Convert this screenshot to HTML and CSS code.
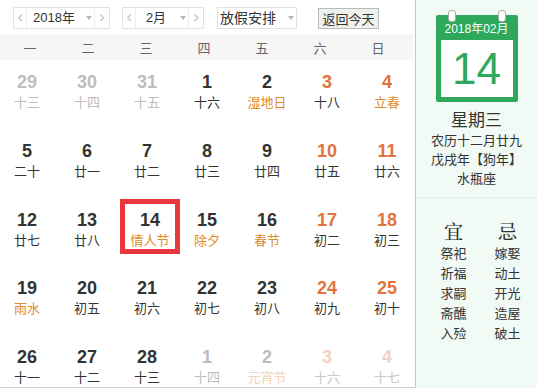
FILE: index.html
```html
<!DOCTYPE html>
<html lang="zh-CN">
<head>
    <meta charset="UTF-8">
    <title>万年历</title>
    <link rel="stylesheet" href="styles.css">
</head>
<body>
    <div class="page">
        <div class="main">
            <div class="toolbar">
                <div class="picker year-picker">
                    <span class="arrow">&lsaquo;</span>
                    <span class="value">2018年<i class="tri"></i></span>
                    <span class="arrow">&rsaquo;</span>
                </div>
                <div class="picker month-picker">
                    <span class="arrow">&lsaquo;</span>
                    <span class="value">2月<i class="tri"></i></span>
                    <span class="arrow">&rsaquo;</span>
                </div>
                <div class="picker holiday-picker">
                    <span class="value">放假安排<i class="tri"></i></span>
                </div>
                <button class="today-btn">返回今天</button>
            </div>
            <div class="weekdays">
                <span>一</span><span>二</span><span>三</span><span>四</span><span>五</span><span>六</span><span>日</span>
            </div>
            <div class="days">
                <div class="day other"><b>29</b><span>十三</span></div>
                <div class="day other"><b>30</b><span>十四</span></div>
                <div class="day other"><b>31</b><span>十五</span></div>
                <div class="day"><b>1</b><span>十六</span></div>
                <div class="day"><b>2</b><span class="fest">湿地日</span></div>
                <div class="day weekend"><b>3</b><span>十八</span></div>
                <div class="day weekend"><b>4</b><span class="fest">立春</span></div>

                <div class="day"><b>5</b><span>二十</span></div>
                <div class="day"><b>6</b><span>廿一</span></div>
                <div class="day"><b>7</b><span>廿二</span></div>
                <div class="day"><b>8</b><span>廿三</span></div>
                <div class="day"><b>9</b><span>廿四</span></div>
                <div class="day weekend"><b>10</b><span>廿五</span></div>
                <div class="day weekend"><b>11</b><span>廿六</span></div>

                <div class="day"><b>12</b><span>廿七</span></div>
                <div class="day"><b>13</b><span>廿八</span></div>
                <div class="day selected"><b>14</b><span class="fest">情人节</span></div>
                <div class="day"><b>15</b><span class="fest">除夕</span></div>
                <div class="day"><b>16</b><span class="fest">春节</span></div>
                <div class="day weekend"><b>17</b><span>初二</span></div>
                <div class="day weekend"><b>18</b><span>初三</span></div>

                <div class="day"><b>19</b><span class="fest">雨水</span></div>
                <div class="day"><b>20</b><span>初五</span></div>
                <div class="day"><b>21</b><span>初六</span></div>
                <div class="day"><b>22</b><span>初七</span></div>
                <div class="day"><b>23</b><span>初八</span></div>
                <div class="day weekend"><b>24</b><span>初九</span></div>
                <div class="day weekend"><b>25</b><span>初十</span></div>

                <div class="day"><b>26</b><span>十一</span></div>
                <div class="day"><b>27</b><span>十二</span></div>
                <div class="day"><b>28</b><span>十三</span></div>
                <div class="day other"><b>1</b><span>十四</span></div>
                <div class="day other"><b>2</b><span class="fest">元宵节</span></div>
                <div class="day other weekend"><b>3</b><span>十六</span></div>
                <div class="day other weekend"><b>4</b><span>十七</span></div>
            </div>
        </div>
        <div class="side">
            <div class="info">
                <div class="cal-icon">
                    <i class="ring left"></i>
                    <i class="ring right"></i>
                    <div class="cal-head">2018年02月</div>
                    <div class="cal-body">14</div>
                </div>
                <div class="weekday-name">星期三</div>
                <div class="lunar">农历十二月廿九</div>
                <div class="lunar">戊戌年【狗年】</div>
                <div class="lunar">水瓶座</div>
            </div>
            <div class="almanac">
                <div class="col">
                    <h4>宜</h4>
                    <span>祭祀</span>
                    <span>祈福</span>
                    <span>求嗣</span>
                    <span>斋醮</span>
                    <span>入殓</span>
                </div>
                <div class="col">
                    <h4>忌</h4>
                    <span>嫁娶</span>
                    <span>动土</span>
                    <span>开光</span>
                    <span>造屋</span>
                    <span>破土</span>
                </div>
            </div>
        </div>
    </div>
</body>
</html>
```

FILE: styles.css
```css
body {
    margin: 0;
    font-family: "Liberation Sans", "Noto Sans CJK SC", sans-serif;
    background: #fff;
    color: #333;
}
.page {
    display: flex;
    width: 537px;
    height: 388px;
    overflow: hidden;
}
.main {
    width: 415px;
    height: 388px;
    box-sizing: border-box;
    border-bottom: 1px solid #cfcfcf;
    overflow: hidden;
}
.toolbar {
    display: flex;
    align-items: center;
    height: 34px;
    padding-left: 13px;
    box-sizing: border-box;
    padding-top: 2px;
}
.picker {
    display: flex;
    height: 22px;
    border: 1px solid #e2e2e2;
    box-sizing: border-box;
    background: #fff;
    font-size: 13px;
    line-height: 20px;
    color: #333;
}
.picker .arrow {
    width: 12px;
    text-align: center;
    color: #c4c4c4;
    font-size: 17px;
    line-height: 18px;
}
.picker .arrow:first-child {
    border-right: 1px solid #eee;
}
.picker .arrow:last-child {
    border-left: 1px solid #eee;
    width: 14px;
}
.picker .value {
    flex: 1;
    display: flex;
    align-items: center;
    justify-content: center;
    gap: 11px;
    padding-left: 4px;
}
.tri {
    width: 0;
    height: 0;
    border-left: 3px solid transparent;
    border-right: 3px solid transparent;
    border-top: 4px solid #b5b5b5;
}
.year-picker { width: 97px; }
.month-picker { width: 82px; margin-left: 12px; }
.month-picker .value { gap: 14px; padding-left: 8px; }
.holiday-picker { width: 80px; margin-left: 13px; font-size: 14px; }
.holiday-picker .value { gap: 12px; padding-left: 0; }
.today-btn {
    margin-left: 21px;
    height: 21px;
    width: 61px;
    padding: 0;
    border: 1px solid #b9bdb9;
    background: #eef1ee;
    font-family: "Noto Sans CJK SC", sans-serif;
    font-size: 13px;
    color: #333;
    line-height: 19px;
}
.weekdays {
    display: grid;
    grid-template-columns: repeat(7, 58px);
    align-items: center;
    height: 26px;
    margin-right: 2px;
    padding-left: 1px;
    background: #f6f6f6;
    font-family: "Noto Sans CJK SC", sans-serif;
    font-size: 13px;
    color: #666;
    text-align: center;
}
.days {
    display: grid;
    grid-template-columns: repeat(7, 60px);
    grid-auto-rows: 55px;
    row-gap: 13.8px;
    margin-left: -3px;
    margin-top: 1px;
}
.day {
    display: flex;
    flex-direction: column;
    align-items: center;
    padding-top: 11px;
    box-sizing: border-box;
}
.day b {
    font-size: 18px;
    line-height: 20px;
    color: #333;
}
.day span {
    font-family: "Noto Sans CJK SC", sans-serif;
    font-size: 13px;
    line-height: 19px;
    color: #333;
}
.day.weekend b { color: #e2733b; }
.day .fest { color: #e08a2a; }
.day.other b,
.day.other span { color: #bdbdbd; }
.day.other .fest { color: #f3d3b5; }
.day.other.weekend b { color: #f2d2c0; }
.day.other.weekend span { color: #c8c8c8; }
.day.selected {
    border: 5px solid #e8383d;
    padding-top: 6px;
    margin-left: 3px;
    margin-right: -3px;
}
.side {
    flex: 1;
    border-left: 1px solid #a6d8c1;
    background: #f1faf5;
    display: flex;
    flex-direction: column;
    font-family: "Noto Sans CJK SC", sans-serif;
    color: #333;
    text-align: center;
}
.info {
    height: 198px;
    box-sizing: border-box;
    border-bottom: 1px solid #ddeee5;
    padding-top: 15px;
}
.cal-icon {
    position: relative;
    width: 82px;
    margin: 0 auto;
    background: #2ea95b;
    padding: 0 5px 5px;
    box-sizing: border-box;
    border-radius: 2px;
}
.ring {
    position: absolute;
    top: -5px;
    width: 6px;
    height: 10px;
    border-radius: 3px;
    background: #fff;
    border: 1px solid #aaa;
}
.ring.left { left: 12px; }
.ring.right { right: 12px; }
.cal-head {
    height: 25px;
    line-height: 28px;
    font-family: "Liberation Sans", "Noto Sans CJK SC", sans-serif;
    font-size: 12px;
    color: #fff;
}
.cal-body {
    height: 57px;
    background: #fff;
    font-family: "Liberation Sans", sans-serif;
    font-size: 44px;
    line-height: 57px;
    color: #2ea95b;
}
.weekday-name {
    margin-top: 6px;
    font-size: 17px;
    line-height: 22px;
}
.lunar {
    font-size: 13px;
    line-height: 19px;
}
.almanac {
    display: flex;
    justify-content: center;
    gap: 24px;
    padding-left: 8px;
    padding-top: 22px;
}
.almanac .col {
    display: flex;
    flex-direction: column;
    align-items: center;
    width: 30px;
}
.almanac h4 {
    margin: 0 0 1px;
    font-family: "Noto Serif CJK SC", "Noto Sans CJK SC", serif;
    font-size: 19px;
    font-weight: 500;
    line-height: 22px;
}
.almanac span {
    font-size: 13px;
    line-height: 20px;
}
```
